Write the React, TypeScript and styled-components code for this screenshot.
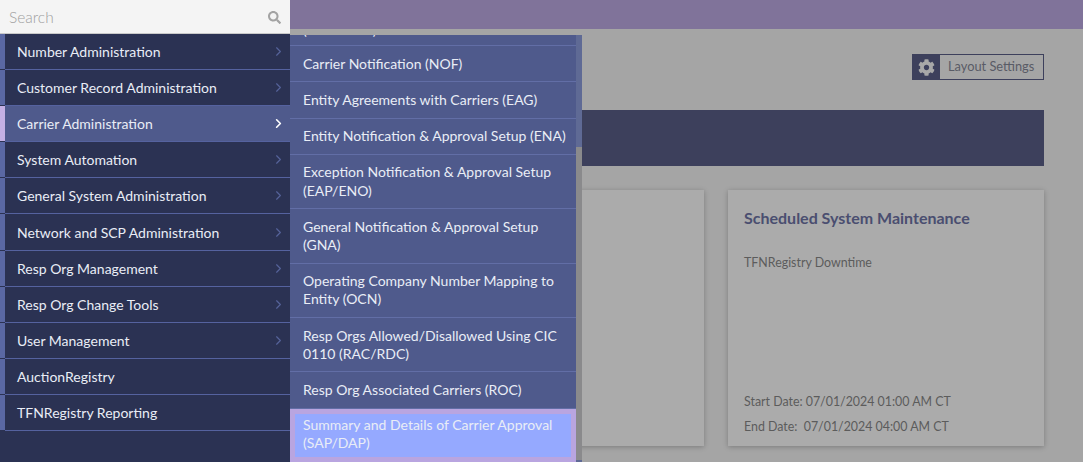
import React from "react";
import styled, { createGlobalStyle } from "styled-components";
import { ChevronRight } from "lucide-react";
import { FaCog, FaSearch } from "react-icons/fa";

const font = `Lato, "Noto Sans", sans-serif`;

const GlobalStyle = createGlobalStyle`
  html, body {
    margin: 0;
    height: 100%;
    overflow: hidden;
    background: #a5a5a5;
    font-family: ${font};
  }
  * {
    box-sizing: border-box;
  }
`;

const menuItems = [
  { label: "Number Administration", more: true },
  { label: "Customer Record Administration", more: true },
  { label: "Carrier Administration", more: true, active: true },
  { label: "System Automation", more: true },
  { label: "General System Administration", more: true },
  { label: "Network and SCP Administration", more: true },
  { label: "Resp Org Management", more: true },
  { label: "Resp Org Change Tools", more: true },
  { label: "User Management", more: true },
  { label: "AuctionRegistry", more: false },
  { label: "TFNRegistry Reporting", more: false },
];

const subItems = [
  { label: "(CARNOAS)", peek: true },
  { label: "Carrier Notification (NOF)" },
  { label: "Entity Agreements with Carriers (EAG)" },
  { label: "Entity Notification & Approval Setup (ENA)" },
  { label: "Exception Notification & Approval Setup (EAP/ENO)" },
  { label: "General Notification & Approval Setup (GNA)" },
  { label: "Operating Company Number Mapping to Entity (OCN)" },
  { label: "Resp Orgs Allowed/Disallowed Using CIC 0110 (RAC/RDC)" },
  { label: "Resp Org Associated Carriers (ROC)" },
  { label: "Summary and Details of Carrier Approval (SAP/DAP)", selected: true },
];

const App = () => {
  return (
    <Page>
      <GlobalStyle />
      <TopBand />
      <Main>
        <SettingsRow>
          <SettingsButton>
            <GearBox>
              <FaCog />
            </GearBox>
            <SettingsLabel>Layout Settings</SettingsLabel>
          </SettingsButton>
        </SettingsRow>
        <Banner />
        <Cards>
          <Card />
          <Card />
          <Card>
            <CardTitle>Scheduled System Maintenance</CardTitle>
            <CardText>TFNRegistry Downtime</CardText>
            <CardDates>
              <CardText>Start Date: 07/01/2024 01:00 AM CT</CardText>
              <CardText>End Date:&nbsp; 07/01/2024 04:00 AM CT</CardText>
            </CardDates>
          </Card>
        </Cards>
      </Main>

      <Menu>
        <Sidebar>
          <SearchBox>
            <SearchText>Search</SearchText>
            <FaSearch />
          </SearchBox>
          {menuItems.map((item) => (
            <MenuRow key={item.label} $active={item.active}>
              <span>{item.label}</span>
              {item.more && <ChevronRight size={15} strokeWidth={item.active ? 2.6 : 1.8} />}
            </MenuRow>
          ))}
        </Sidebar>
        <Flyout>
          <SubList>
            {subItems.map((item) => (
              <SubRow key={item.label} $selected={item.selected} $peek={item.peek}>
                {item.label}
              </SubRow>
            ))}
          </SubList>
          <Scrollbar>
            <ScrollThumb />
          </Scrollbar>
        </Flyout>
      </Menu>
    </Page>
  );
};

export default App;

const Page = styled.div`
  position: relative;
  height: 462px;
  overflow: hidden;
`;

const TopBand = styled.div`
  height: 29px;
  background: #80739a;
`;

const Main = styled.div`
  padding: 25px 39px 0 48px;
`;

const SettingsRow = styled.div`
  display: flex;
  justify-content: flex-end;
`;

const SettingsButton = styled.div`
  display: flex;
  height: 26px;
  width: 132px;
  border: 1px solid #3d405c;
`;

const GearBox = styled.div`
  display: flex;
  align-items: center;
  justify-content: center;
  width: 27px;
  background: #3d405c;
  color: #a8a8a8;
  font-size: 17px;
`;

const SettingsLabel = styled.div`
  flex: 1;
  padding-left: 8px;
  font-size: 12.8px;
  line-height: 23px;
  color: #595b66;
`;

const Banner = styled.div`
  height: 56px;
  margin-top: 30px;
  background: #3d405c;
`;

const Cards = styled.div`
  display: grid;
  grid-template-columns: repeat(3, 316px);
  gap: 24px;
  margin-top: 24px;
`;

const Card = styled.div`
  display: flex;
  flex-direction: column;
  height: 256px;
  padding: 19px 16px 11px;
  background: #ababab;
  box-shadow: 0 1px 5px rgba(0, 0, 0, 0.25);
`;

const CardTitle = styled.div`
  font-size: 16px;
  font-weight: 700;
  line-height: 18px;
  color: #4a4e70;
`;

const CardText = styled.div`
  margin-top: 28px;
  font-size: 12.4px;
  line-height: 16px;
  color: #5c5c5c;
`;

const CardDates = styled.div`
  display: flex;
  flex-direction: column;
  gap: 9px;
  margin-top: auto;
  ${CardText} {
    margin-top: 0;
  }
`;

const Menu = styled.div`
  position: absolute;
  top: 0;
  left: 0;
  bottom: 0;
  display: flex;
`;

const Sidebar = styled.div`
  width: 290px;
  background: #2b3253;
`;

const SearchBox = styled.div`
  display: flex;
  align-items: center;
  justify-content: space-between;
  height: 34px;
  padding: 1px 9px 0;
  background: #f4f4f4;
  border-bottom: 1px solid #c9c9c9;
  color: #a3a3a3;
  font-size: 13px;
`;

const SearchText = styled.span`
  font-size: 15.5px;
  font-weight: 300;
  color: #a0a0a0;
`;

const MenuRow = styled.div<{ $active?: boolean }>`
  position: relative;
  display: flex;
  align-items: center;
  justify-content: space-between;
  height: 36.1px;
  padding: 0 4px 0 12px;
  margin-left: 5px;
  font-size: 14px;
  color: #e9edf6;
  background: ${(p) => (p.$active ? "#4f5a8c" : "#2b3253")};
  border-bottom: 1px solid #55629f;
  &::before {
    content: "";
    position: absolute;
    top: 0;
    bottom: 0;
    left: -5px;
    width: 5px;
    background: ${(p) => (p.$active ? "#c4b0e4" : "#5a68a4")};
  }
  svg {
    color: ${(p) => (p.$active ? "#ffffff" : "#56639b")};
  }
`;

const Flyout = styled.div`
  display: flex;
  width: 292px;
  margin-top: 35px;
  overflow: hidden;
  background: #4f5a8c;
`;

const SubList = styled.div`
  flex: 1;
  margin-top: -25px;
`;

const SubRow = styled.div<{ $selected?: boolean; $peek?: boolean }>`
  padding: ${(p) => (p.$selected ? "2.5px 8px 4.5px" : p.$peek ? "11px 8px 6px 13px" : "8.5px 8px 8.5px 13px")};
  font-size: 14px;
  line-height: 18.2px;
  color: #e9edf6;
  background: ${(p) => (p.$selected ? "#95a9ff" : "transparent")};
  border-bottom: 1px solid #626ea6;
  ${(p) => p.$selected && "border: 5px solid #b9a5e0;"}
`;

const Scrollbar = styled.div`
  width: 6px;
  padding-top: 112px;
  background: #5f6a95;
`;

const ScrollThumb = styled.div`
  height: 313px;
  background: #8a8a8c;
`;
